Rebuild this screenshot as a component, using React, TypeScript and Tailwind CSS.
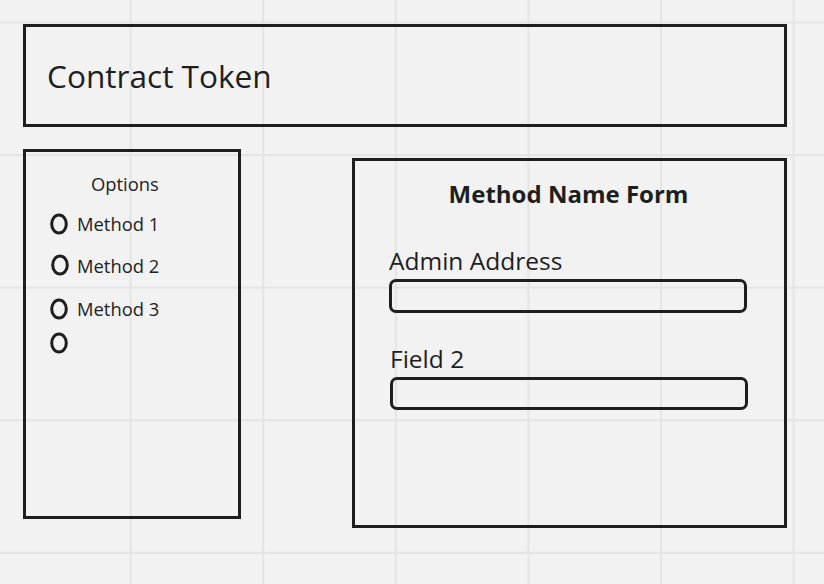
const methods = ['Method 1', 'Method 2', 'Method 3'];

function Ring({ className = '' }: { className?: string }) {
  return (
    <svg width="18" height="22" viewBox="0 0 18 22" className={className}>
      <ellipse cx="9" cy="11" rx="7.3" ry="9" fill="none" stroke="#1e1e1e" strokeWidth="3" />
    </svg>
  );
}

export default function App() {
  return (
    <div className="w-[824px] h-[584px] overflow-hidden bg-[#f2f2f2] bg-[linear-gradient(to_right,#e4e4e4_2px,transparent_2px),linear-gradient(to_bottom,#e4e4e4_2px,transparent_2px)] bg-size-[132.6px_132.6px] bg-position-[-3px_21.5px] pt-[24px] pl-[23px] font-['Open_Sans',sans-serif] text-[#1e1e1e]">
      {/* header */}
      <div className="w-[764px] h-[103px] border-[3px] border-[#1e1e1e] flex items-center pl-[21px]">
        <h1 className="text-[31.6px] leading-[40px]">Contract Token</h1>
      </div>

      <div className="flex items-start mt-[22px]">
        {/* options list */}
        <div className="w-[218px] h-[370px] border-[3px] border-[#1e1e1e] pt-[20px]">
          <div className="pl-[65px] text-[18.4px] leading-[24px]">Options</div>
          <ul className="mt-[16px] pl-[24px] text-[18.4px] leading-[24px]">
            {methods.map((m, i) => (
              <li key={m} className={`flex items-center gap-[9px] h-[24px] ${i === 0 ? '' : i === 1 ? 'mt-[18px]' : 'mt-[19px]'}`}>
                <Ring className={i === 1 ? 'ml-[1px] -mt-[3px]' : ''} />
                <span className={i === 1 ? '-ml-[1px]' : ''}>{m}</span>
              </li>
            ))}
            <li className="flex items-center h-[24px] mt-[10px]">
              <Ring />
            </li>
          </ul>
        </div>

        {/* form */}
        <div className="ml-[111px] mt-[9px] w-[435px] h-[370px] border-[3px] border-[#1e1e1e] pt-[17px]">
          <h2 className="text-center font-bold text-[24px] leading-[32px] pr-[2px]">Method Name Form</h2>
          <div className="pl-[34px] mt-[35px]">
            <label className="block text-[24.5px] leading-[32px]">Admin Address</label>
            <input type="text" className="mt-[2px] block w-[358px] h-[34px] border-[3px] border-[#1e1e1e] rounded-[7px] bg-transparent" />
            <label className="block mt-[30px] ml-[1px] text-[24.5px] leading-[32px]">Field 2</label>
            <input type="text" className="mt-[2px] ml-[1px] block w-[358px] h-[33px] border-[3px] border-[#1e1e1e] rounded-[7px] bg-transparent" />
          </div>
        </div>
      </div>
    </div>
  );
}
